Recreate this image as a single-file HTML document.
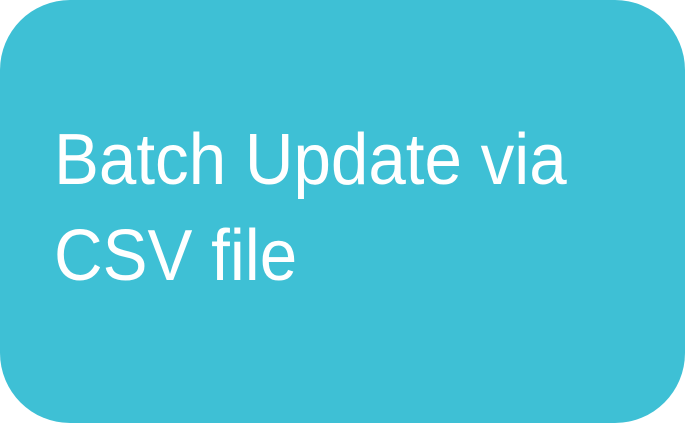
<!DOCTYPE html>
<html><head><style>
html,body{margin:0;padding:0;background:#fff;width:685px;height:423px;overflow:hidden}
.box{position:absolute;left:0;top:0;width:685px;height:423px;background:#3EC0D5;border-radius:70px;}
.t{position:absolute;left:54px;top:112px;color:#fff;font-family:"Liberation Sans",sans-serif;font-size:72px;line-height:96px;transform:scaleX(0.935);transform-origin:0 0;white-space:nowrap}
</style></head><body>
<div class="box"></div>
<div class="t">Batch Update via<br>CSV file</div>
</body></html>
